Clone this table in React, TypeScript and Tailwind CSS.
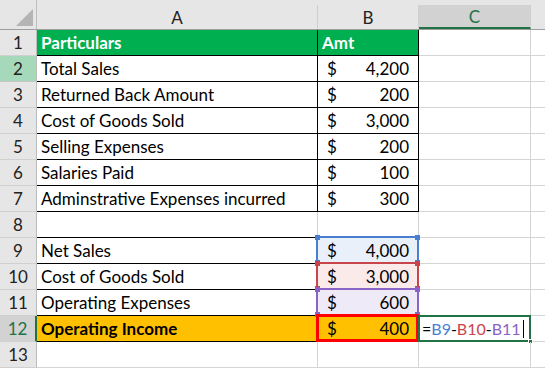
import React from "react";

type Row = {
  n: number;
  a?: string;
  amt?: string;
  kind?: "head" | "data" | "blank" | "sum" | "total";
  hl?: "blue" | "red" | "purple";
};

const rows: Row[] = [
  { n: 1, a: "Particulars", amt: "Amt", kind: "head" },
  { n: 2, a: "Total Sales", amt: "4,200", kind: "data" },
  { n: 3, a: "Returned Back Amount", amt: "200", kind: "data" },
  { n: 4, a: "Cost of Goods Sold", amt: "3,000", kind: "data" },
  { n: 5, a: "Selling Expenses", amt: "200", kind: "data" },
  { n: 6, a: "Salaries Paid", amt: "100", kind: "data" },
  { n: 7, a: "Adminstrative Expenses incurred", amt: "300", kind: "data" },
  { n: 8, kind: "blank" },
  { n: 9, a: "Net Sales", amt: "4,000", kind: "sum", hl: "blue" },
  { n: 10, a: "Cost of Goods Sold", amt: "3,000", kind: "sum", hl: "red" },
  { n: 11, a: "Operating Expenses", amt: "600", kind: "sum", hl: "purple" },
  { n: 12, a: "Operating Income", amt: "400", kind: "total" },
  { n: 13 },
];

const hlStyle = {
  blue: { bg: "bg-[#e9f0fa]", border: "border-[#4a7fd0]", dot: "bg-[#4a7fd0]" },
  red: { bg: "bg-[#fbeaea]", border: "border-[#c9454c]", dot: "bg-[#c9454c]" },
  purple: { bg: "bg-[#efeaf7]", border: "border-[#8a63c6]", dot: "bg-[#8a63c6]" },
};

function Money({ value }: { value: string }) {
  return (
    <div className="flex h-full items-center justify-between pl-[9px] pr-[9px]">
      <span>$</span>
      <span>{value}</span>
    </div>
  );
}

function RefBox({ color }: { color: "blue" | "red" | "purple" }) {
  const s = hlStyle[color];
  return (
    <div className={`pointer-events-none absolute -left-[2px] -top-[2px] -right-[1px] -bottom-[1px] border-2 ${s.border}`}>
      <div className={`absolute -left-[3px] -top-[3px] h-[5px] w-[5px] ${s.dot}`} />
      <div className={`absolute -right-[3px] -top-[3px] h-[5px] w-[5px] ${s.dot}`} />
      <div className={`absolute -left-[3px] -bottom-[3px] h-[5px] w-[5px] ${s.dot}`} />
      <div className={`absolute -right-[3px] -bottom-[3px] h-[5px] w-[5px] ${s.dot}`} />
    </div>
  );
}

export default function App() {
  return (
    <div className="h-[368px] w-[545px] overflow-hidden bg-white font-['Lato',sans-serif] text-[17px] leading-none text-black">
      {/* column headers */}
      <div className="grid h-[30px] grid-cols-[37px_281px_101px_112px_1fr] border-b border-[#9e9e9e] bg-[#e6e6e6] text-[#222]">
        <div className="relative border-r border-[#bdbdbd]">
          <svg className="absolute left-[16px] top-[9px]" width="17" height="17" viewBox="0 0 17 17">
            <polygon points="17,0 17,17 0,17" fill="#b4b4b4" />
          </svg>
        </div>
        <div className="mt-[5px] flex items-center justify-center border-r border-[#cfcfcf]">A</div>
        <div className="mt-[5px] flex items-center justify-center border-r border-[#cfcfcf]">B</div>
        <div className="mt-[5px] flex items-center justify-center border-b-2 border-r border-b-[#217346] border-r-[#cfcfcf] bg-[#d2d2d2] text-[#217346]">
          C
        </div>
        <div className="mt-[5px]" />
      </div>

      {rows.map((r) => {
        const black = r.kind === "head" || r.kind === "data";
        const aBottomBlack = black || r.kind === "blank" || r.kind === "sum" || r.kind === "total";
        return (
          <div key={r.n} className="grid h-[26px] grid-cols-[37px_281px_101px_112px_1fr]">
            {/* row header */}
            <div
              className={`flex items-center justify-center border-b border-r ${
                r.n === 12
                  ? "border-b-[#d0d0d0] border-r-2 border-r-[#217346] bg-[#d2d2d2] text-[#217346]"
                  : r.n === 2
                  ? "border-b-[#c6c6c6] border-r-[#bdbdbd] bg-[#a6d8ba] text-[#222]"
                  : "border-b-[#d0d0d0] border-r-[#bdbdbd] bg-[#e6e6e6] text-[#222]"
              }`}
            >
              {r.n}
            </div>

            {/* column A */}
            <div
              className={`flex items-center whitespace-nowrap border-b border-r pl-[4px] ${
                aBottomBlack ? "border-b-black" : "border-b-[#d4d4d4]"
              } ${black ? "border-r-black" : "border-r-[#d4d4d4]"} ${
                r.kind === "head"
                  ? "bg-[#00b050] font-bold text-white"
                  : r.kind === "total"
                  ? "bg-[#ffc000] font-bold"
                  : ""
              }`}
            >
              {r.a}
            </div>

            {/* column B */}
            <div
              className={`relative border-b border-r ${
                black ? "border-b-black border-r-black" : "border-b-[#d4d4d4] border-r-[#d4d4d4]"
              } ${
                r.kind === "head"
                  ? "bg-[#00b050] font-bold text-white"
                  : r.kind === "total"
                  ? "bg-[#ffc000]"
                  : r.hl
                  ? hlStyle[r.hl].bg
                  : ""
              }`}
            >
              {r.kind === "head" && <div className="flex h-full items-center pl-[4px]">{r.amt}</div>}
              {(r.kind === "data" || r.kind === "sum" || r.kind === "total") && r.amt && <Money value={r.amt} />}
              {r.hl && <RefBox color={r.hl} />}
              {r.kind === "total" && (
                <div className="pointer-events-none absolute -left-[2px] -top-[2px] -right-[1px] -bottom-[1px] border-[3px] border-[#ff0000]" />
              )}
            </div>

            {/* column C */}
            <div className="relative border-b border-r border-[#d4d4d4]">
              {r.n === 12 && (
                <>
                  <div className="flex h-full items-center pl-[3px] text-[16px]">
                    <span>=</span>
                    <span className="text-[#4a7fd0]">B9</span>
                    <span>-</span>
                    <span className="text-[#c9454c]">B10</span>
                    <span>-</span>
                    <span className="text-[#8a63c6]">B11</span>
                    <span className="ml-[2px] inline-block h-[18px] w-px bg-black" />
                  </div>
                  <div className="pointer-events-none absolute -left-[1px] -top-[1px] -right-[1px] -bottom-[1px] border-2 border-[#217346]">
                    <div className="absolute -bottom-[4px] -right-[4px] h-[5px] w-[5px] border border-white bg-[#217346]" />
                  </div>
                </>
              )}
            </div>

            {/* column D */}
            <div className="border-b border-[#d4d4d4]" />
          </div>
        );
      })}
    </div>
  );
}
